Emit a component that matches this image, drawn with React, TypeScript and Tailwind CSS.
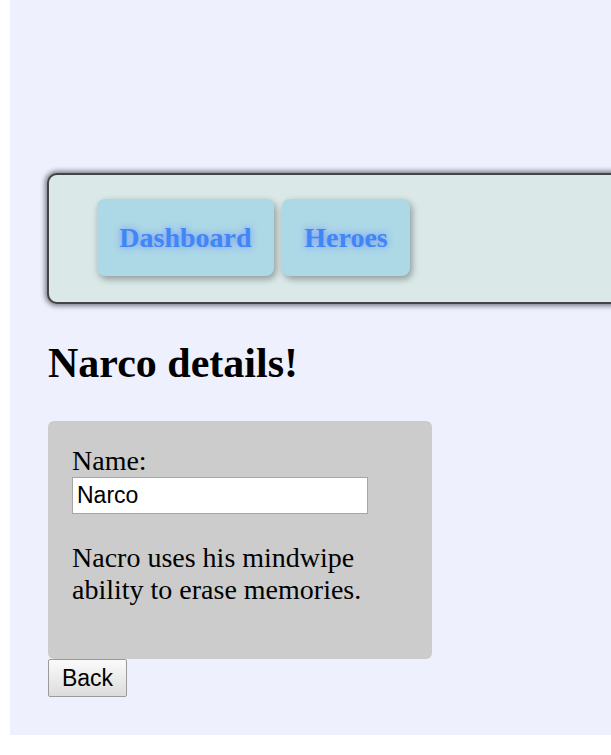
export default function App() {
  return (
    <div className="h-[755px] w-[611px] overflow-hidden bg-white">
      <div className="ml-[10px] h-[735px] overflow-hidden bg-[#eef0fe] pt-[173px] font-['Liberation_Serif',serif] text-[28px] leading-[32px] text-black">
        <nav className="ml-[37px] flex w-[620px] gap-2 rounded-[10px] border-2 border-[#444] bg-[#dae8e8] pl-[48px] pt-[24px] pb-[26px] shadow-[0_0_5px_2px_rgba(50,50,60,0.6)]">
          <a className="flex h-[77px] w-[177px] items-center justify-center rounded-lg bg-[#add8e6] font-bold text-[#3f87f5] shadow-[2px_3px_7px_rgba(0,0,0,0.35)] [text-shadow:0_0_7px_rgba(90,120,255,0.75)]">
            Dashboard
          </a>
          <a className="flex h-[77px] w-[128px] items-center justify-center rounded-lg bg-[#add8e6] font-bold text-[#3f87f5] shadow-[2px_3px_7px_rgba(0,0,0,0.35)] [text-shadow:0_0_7px_rgba(90,120,255,0.75)]">
            Heroes
          </a>
        </nav>

        <div className="ml-[38px]">
          <h2 className="mt-[35px] mb-[34px] text-[42px] leading-[48px] font-bold">Narco details!</h2>

          <div className="w-[384px] rounded-md bg-[#cccccc] px-[24px] pt-[24px] pb-[25px]">
            <label className="block">Name:</label>
            <input
              defaultValue="Narco"
              className="block h-[37px] w-[296px] border border-[#a6a6a6] bg-white px-[4px] font-['Liberation_Sans',sans-serif] text-[23px] leading-none text-black outline-none"
            />
            <p className="my-[28px]">Nacro uses his mindwipe ability to erase memories.</p>
          </div>

          <button className="h-[38px] w-[79px] rounded-[2px] border border-[#9a9a9a] bg-gradient-to-b from-[#fbfbfb] to-[#dcdcdc] font-['Liberation_Sans',sans-serif] text-[23px] leading-none text-black">
            Back
          </button>
        </div>
      </div>
    </div>
  );
}
